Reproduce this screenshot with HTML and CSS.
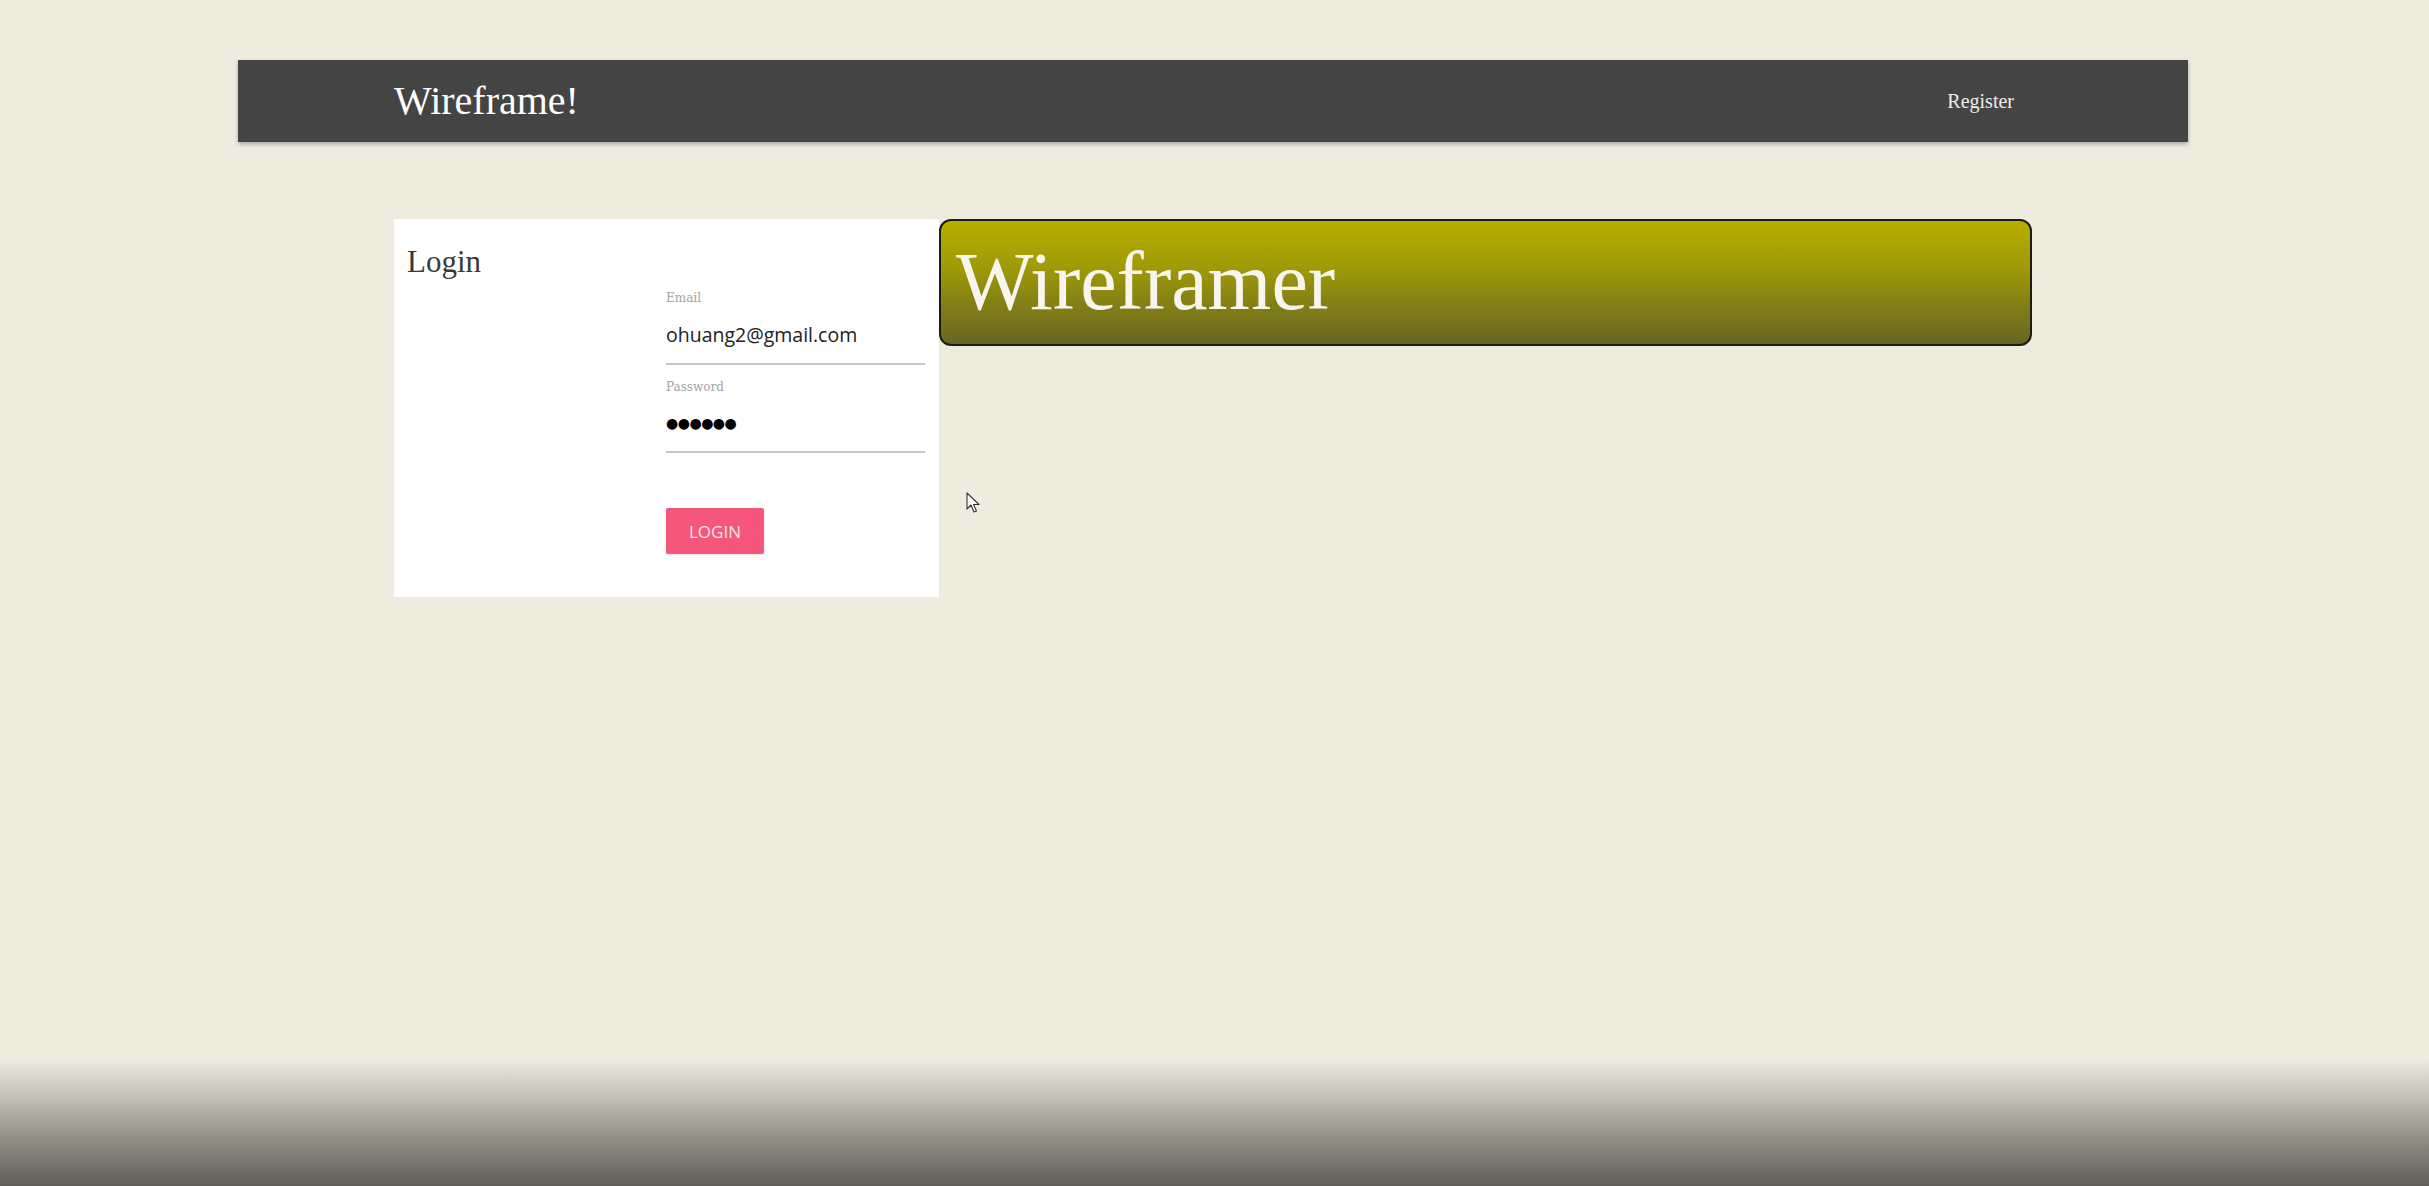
FILE: index.html
```html
<!DOCTYPE html>
<html lang="en">
<head>
<meta charset="utf-8">
<title>Wireframe!</title>
<link rel="stylesheet" href="styles.css">
</head>
<body>
<nav class="navbar">
  <div class="nav-inner">
    <a class="brand" href="#">Wireframe!</a>
    <a class="nav-link" href="#">Register</a>
  </div>
</nav>
<main class="content">
  <section class="login-card">
    <div class="login-title-col">
      <h2 class="login-title">Login</h2>
    </div>
    <form class="login-form">
      <label class="field-label">Email</label>
      <div class="field-value">ohuang2@gmail.com</div>
      <label class="field-label">Password</label>
      <div class="field-value dots">●●●●●●</div>
      <button class="login-btn" type="button">LOGIN</button>
    </form>
  </section>
  <section class="banner">
    <h1 class="banner-title">Wireframer</h1>
  </section>
</main>
<svg class="cursor" width="14" height="22" viewBox="0 0 14 22"><path d="M1 1 L1 17 L5 13 L8 20 L10.5 19 L7.5 12.5 L13 12.5 Z" fill="#fff" stroke="#333" stroke-width="1.1" stroke-linejoin="round"/></svg>
<div class="bottom-fade"></div>
</body>
</html>
```
FILE: styles.css
```css
html, body {
  margin: 0;
  padding: 0;
}
body {
  background: #eeecdf;
  min-height: 1186px;
  padding-right: 3px;
  font-family: "Liberation Serif", "Times New Roman", serif;
  position: relative;
}
.navbar {
  width: 1950px;
  height: 82px;
  margin: 60px auto 0;
  background: #444444;
  box-shadow: 0 2px 4px rgba(0, 0, 0, 0.3);
  display: flex;
  justify-content: center;
}
.nav-inner {
  width: 1638px;
  display: flex;
  align-items: center;
  justify-content: space-between;
}
.brand {
  color: #ffffff;
  text-decoration: none;
  font-size: 40px;
  line-height: 46px;
}
.nav-link {
  color: #ececec;
  text-decoration: none;
  font-size: 20px;
  padding-right: 18px;
}
.content {
  width: 1638px;
  margin: 77px auto 0;
  display: flex;
  align-items: flex-start;
}
.login-card {
  width: 545px;
  height: 378px;
  background: #ffffff;
  display: grid;
  grid-template-columns: 272px 1fr;
  box-sizing: border-box;
}
.login-title-col {
  padding: 25px 0 0 13px;
}
.login-title {
  margin: 0;
  font-weight: normal;
  font-size: 31px;
  line-height: 36px;
  color: #3a3a3a;
}
.login-form {
  padding: 71px 14px 0 0;
  display: flex;
  flex-direction: column;
  align-items: flex-start;
}
.field-label {
  line-height: 17px;
  color: #a3a3a3;
  font-family: "DejaVu Serif", "Liberation Serif", serif;
  font-size: 12px;
}
.field-value {
  align-self: stretch;
  font-family: "Open Sans", "Noto Sans", sans-serif;
  font-size: 19.5px;
  line-height: 26px;
  color: #222;
  margin-top: 15px;
  padding-bottom: 15px;
  border-bottom: 2px solid #c6c6c6;
  margin-bottom: 14px;
}
.dots {
  font-family: "DejaVu Sans", sans-serif;
  font-size: 14px;
  color: #000;
  letter-spacing: -0.5px;
  margin-top: 14px;
  padding-bottom: 15px;
}
.login-btn {
  margin-top: 41px;
  width: 98px;
  height: 46px;
  border: none;
  border-radius: 2px;
  background: #f5567c;
  color: #fbe3e9;
  font-family: "Open Sans", "Noto Sans", sans-serif;
  font-size: 17px;
  padding: 0;
  box-shadow: 0 1px 2px rgba(0, 0, 0, 0.12);
}
.banner {
  width: 1093px;
  height: 127px;
  box-sizing: border-box;
  border: 2px solid #1c1c14;
  border-radius: 12px;
  background: linear-gradient(to bottom, #b9ad00 0%, #a19c07 35%, #858314 65%, #676522 100%);
  padding: 0 0 0 15px;
}
.banner-title {
  margin: 0;
  font-weight: normal;
  font-size: 82px;
  line-height: 94px;
  padding-top: 14px;
  color: #f7f6ee;
}
.cursor {
  position: absolute;
  left: 966px;
  top: 492px;
}
.bottom-fade {
  position: fixed;
  left: 0;
  right: 0;
  bottom: 0;
  height: 128px;
  background: linear-gradient(to bottom, rgba(0, 0, 0, 0) 0%, rgba(30, 30, 25, 0.2) 30%, rgba(25, 25, 20, 0.42) 60%, rgba(15, 15, 10, 0.64) 100%);
  pointer-events: none;
}
```
